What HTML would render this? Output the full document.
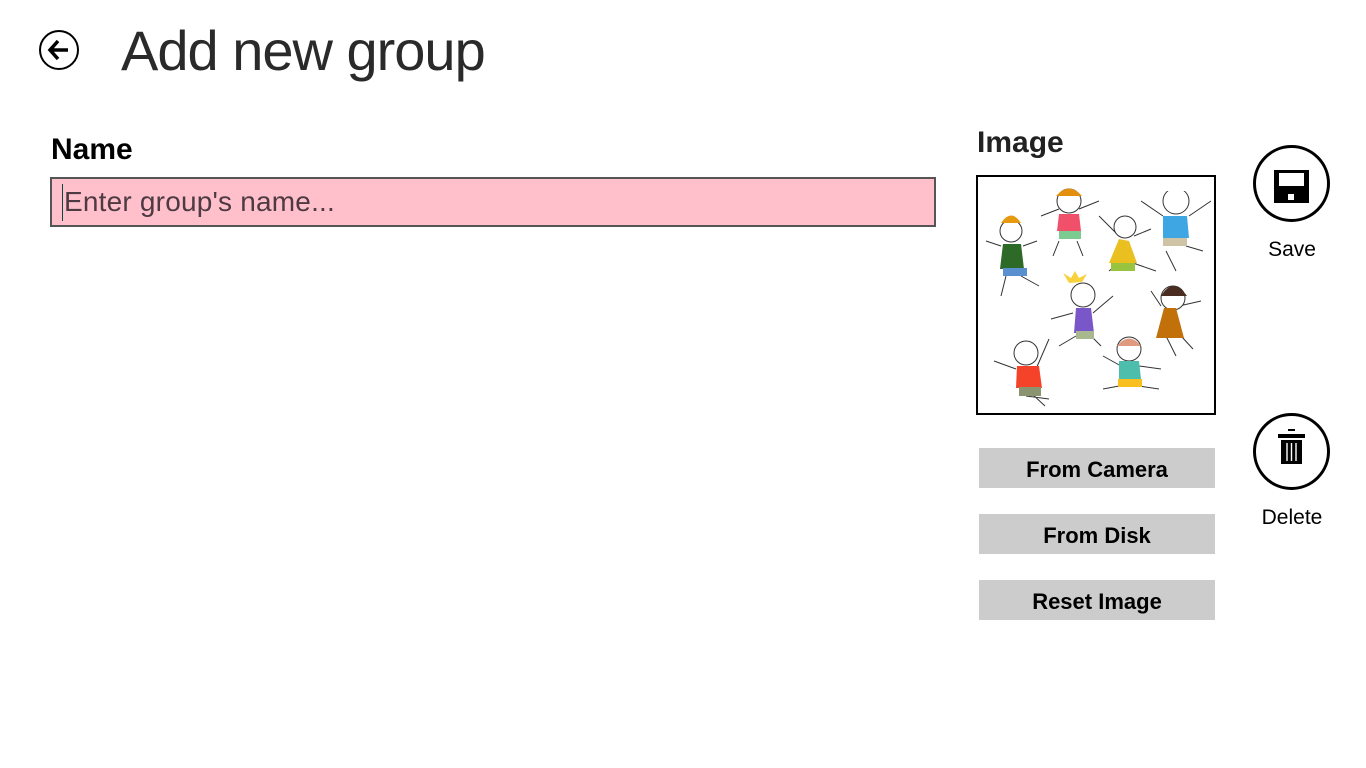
<!DOCTYPE html>
<html><head><meta charset="utf-8"><style>
html,body{margin:0;padding:0;background:#fff;width:1366px;height:768px;overflow:hidden;font-family:"Liberation Sans",sans-serif}
.abs{position:absolute}
.title{left:121px;top:18px;font-size:56px;color:#2a2a2a;letter-spacing:-1px;font-weight:300;line-height:66px}
.lbl{font-weight:bold;font-size:30px;color:#000}
.input{left:50px;top:177px;width:882px;height:46px;background:#ffc0cb;border:2px solid #555}
.ph{left:12px;top:7px;font-size:28px;color:#4d3a42;letter-spacing:0.2px}
.caret{left:10px;top:5px;width:1px;height:37px;background:#0a4a3a}
.btn{left:979px;width:236px;height:40px;background:#cccccc;text-align:center;font-weight:bold;font-size:22px;line-height:43px;color:#000}
.circ{width:77px;height:77px;border:3px solid #000;border-radius:50%;box-sizing:border-box}
.cap{font-size:21px;color:#000;width:120px;text-align:center}
</style></head><body>
<div class="abs" style="left:39px;top:30px;width:40px;height:40px;border:2px solid #000;border-radius:50%;box-sizing:border-box">
<svg width="36" height="36" viewBox="0 0 36 36" style="position:absolute;left:0;top:0"><path d="M9 18 H27 M17 9 L9 18 L17 27" stroke="#000" stroke-width="3.5" fill="none" stroke-linejoin="miter"/></svg></div>
<div class="abs title">Add new group</div>
<div class="abs lbl" style="left:51px;top:133px">Name</div>
<div class="abs input"><div class="abs caret"></div><div class="abs ph">Enter group's name...</div></div>
<div class="abs lbl" style="left:977px;top:126px;color:#222">Image</div>
<div class="abs" style="left:976px;top:175px;width:236px;height:236px;border:2px solid #000;background:#fff">
<svg width="236" height="236" viewBox="977 176 236 236">
<g stroke="#333" stroke-width="1" fill="none">
<path d="M985 240 L1000 245 M1022 245 L1036 240 M1005 275 L1000 295 M1020 275 L1038 285 M1040 215 L1058 208 M1078 208 L1098 200 M1058 240 L1052 255 M1076 240 L1082 255 M1098 215 L1115 232 M1133 235 L1150 228 M1118 262 L1108 270 M1132 262 L1155 270 M1140 200 L1162 215 M1188 215 L1210 200 M1165 250 L1175 270 M1185 245 L1202 250 M1050 318 L1072 312 M1092 312 L1112 295 M1075 335 L1058 345 M1090 335 L1100 345 M1150 290 L1160 305 M1178 305 L1200 300 M1165 335 L1175 355 M1180 335 L1192 348 M993 360 L1015 368 M1035 368 L1048 338 M1025 395 L1048 398 M1030 392 L1044 405 M1102 355 L1120 365 M1138 365 L1160 368 M1118 385 L1102 388 M1138 385 L1158 388"/>
<g fill="#fff">
<circle cx="1010" cy="230" r="11"/><circle cx="1068" cy="200" r="12"/><circle cx="1124" cy="226" r="11"/><circle cx="1175" cy="200" r="13"/><circle cx="1082" cy="294" r="12"/><circle cx="1172" cy="297" r="12"/><circle cx="1025" cy="352" r="12"/><circle cx="1128" cy="348" r="12"/></g></g>
<g stroke="none">
<path d="M1002 243 h18 l3 25 h-24z" fill="#2d6a27"/><rect x="1002" y="267" width="24" height="8" fill="#5a8fd0"/>
<path d="M1058 213 h20 l2 17 h-24z" fill="#f0506a"/><rect x="1058" y="230" width="22" height="8" fill="#7ccb90"/>
<path d="M1118 238 l10 2 l8 22 h-28z" fill="#eac020"/><rect x="1110" y="262" width="24" height="8" fill="#99c440"/>
<path d="M1162 215 h24 l2 22 h-26z" fill="#3fa6e4"/><rect x="1162" y="237" width="24" height="8" fill="#cfc3a6"/>
<path d="M1075 307 h15 l3 25 h-20z" fill="#7957c8"/><rect x="1075" y="330" width="18" height="8" fill="#a9b88e"/>
<path d="M1163 307 h12 l8 30 h-28z" fill="#c2700a"/>
<path d="M1016 365 h22 l3 22 h-26z" fill="#f5432a"/><rect x="1018" y="386" width="22" height="9" fill="#8a9470"/>
<path d="M1118 360 h20 l2 18 h-22z" fill="#4dbdac"/><rect x="1117" y="378" width="24" height="8" fill="#f7c020"/>
<path d="M1055 195 q13 -15 26 0 z" fill="#e3900e"/><path d="M1068 282 l-6 -10 l8 5 l4 -7 l4 7 l8 -4 l-5 8 z" fill="#f7d23c"/>
<path d="M1160 295 q12 -20 26 0 z" fill="#4a2c20"/><path d="M1116 345 q12 -15 24 0 z" fill="#e09a80"/>
<path d="M1000 222 q10 -15 20 0 z" fill="#e69a10"/><path d="M1164 190 q10 -12 22 0 z" fill="#fff"/>
</g></svg></div>
<div class="abs btn" style="top:448px">From Camera</div>
<div class="abs btn" style="top:514px">From Disk</div>
<div class="abs btn" style="top:580px">Reset Image</div>
<div class="abs circ" style="left:1253px;top:145px">
<svg width="77" height="77" viewBox="0 0 77 77" style="position:absolute;left:-3px;top:-3px"><path d="M21 25 H56 V58 H21 Z M26 28 V41 H51 V28 Z M35 49 h6 v6 h-6 z" fill="#000" fill-rule="evenodd"/></svg></div>
<div class="abs cap" style="left:1232px;top:238px">Save</div>
<div class="abs circ" style="left:1253px;top:413px">
<svg width="77" height="77" viewBox="0 0 77 77" style="position:absolute;left:-3px;top:-3px"><path d="M35 16 h7 v2 h-7z M25 21 h27 v4 h-27z M28 27 h21 v24 h-21z" fill="#000"/><path d="M34 30 v18 M38.5 30 v18 M43 30 v18" stroke="#fff" stroke-width="1.4"/></svg></div>
<div class="abs cap" style="left:1232px;top:506px">Delete</div>
</body></html>
